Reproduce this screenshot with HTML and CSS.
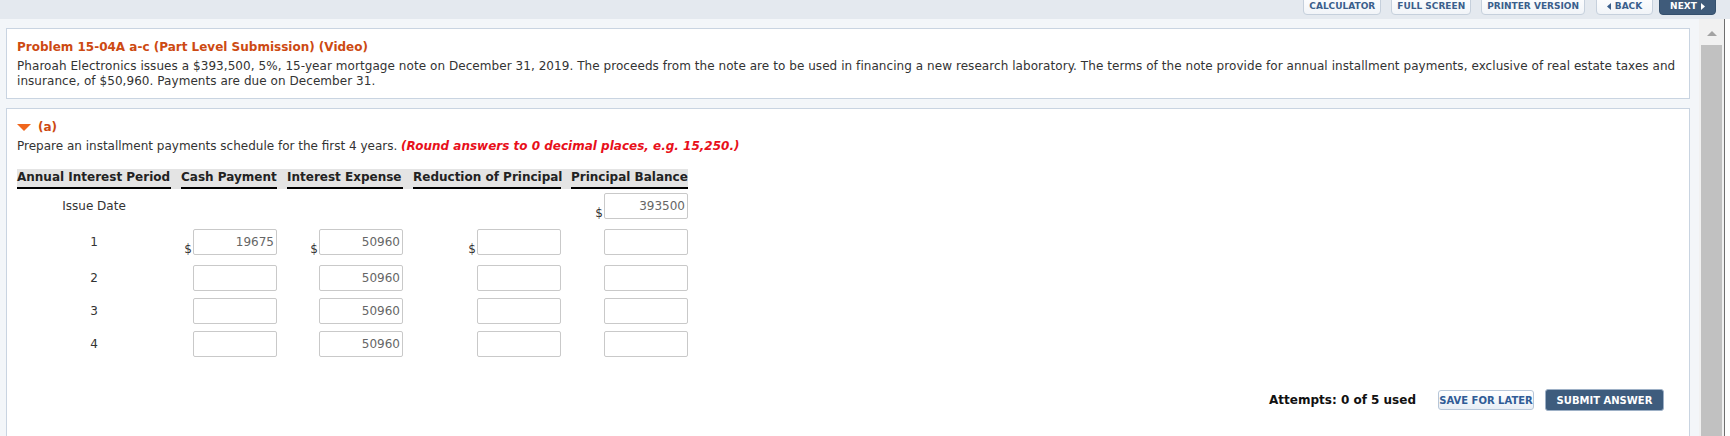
FILE: index.html
```html
<!DOCTYPE html>
<html lang="en">
<head>
  <meta charset="UTF-8" />
  <title>Problem 15-04A</title>
  <link rel="stylesheet" href="styles.css">
</head>
<body>
  <div class="toolbar">
    <button class="tool-btn">Calculator</button>
    <button class="tool-btn">Full Screen</button>
    <button class="tool-btn">Printer Version</button>
    <div class="nav-group">
      <button class="tool-btn nav-btn">
        <svg width="4" height="7" viewBox="0 0 4 7"><path d="M4 0 L0 3.5 L4 7 Z" fill="#3b5f8c"/></svg>Back
      </button>
      <button class="tool-btn nav-btn next-btn">
        Next<svg width="4" height="7" viewBox="0 0 4 7"><path d="M0 0 L4 3.5 L0 7 Z" fill="#fff"/></svg>
      </button>
    </div>
  </div>

  <div class="screen">
    <main class="pane">
      <section class="box problem">
        <h1 class="problem-title">Problem 15-04A a-c (Part Level Submission) (Video)</h1>
        <p class="problem-text">Pharoah Electronics issues a $393,500, 5%, 15-year mortgage note on December 31, 2019. The proceeds from the note are to be used in financing a new research laboratory. The terms of the note provide for annual installment payments, exclusive of real estate taxes and insurance, of $50,960. Payments are due on December 31.</p>
      </section>

      <section class="box part">
        <h2 class="part-title"><span class="caret"></span>(a)</h2>
        <p class="prompt">Prepare an installment payments schedule for the first 4 years. <em class="hint">(Round answers to 0 decimal places, e.g. 15,250.)</em></p>

        <div class="schedule">
          <div class="sched-row sched-head">
            <div class="head-cell">Annual Interest Period</div>
            <div class="head-cell">Cash Payment</div>
            <div class="head-cell">Interest Expense</div>
            <div class="head-cell">Reduction of Principal</div>
            <div class="head-cell">Principal Balance</div>
          </div>

          <div class="sched-row money first">
            <div class="period">Issue Date</div>
            <div class="cell"></div>
            <div class="cell"></div>
            <div class="cell"></div>
            <div class="cell"><span class="dollar">$</span><input class="amount" value="393500"></div>
          </div>

          <div class="sched-row money">
            <div class="period">1</div>
            <div class="cell"><span class="dollar">$</span><input class="amount" value="19675"></div>
            <div class="cell"><span class="dollar">$</span><input class="amount" value="50960"></div>
            <div class="cell"><span class="dollar">$</span><input class="amount" value=""></div>
            <div class="cell"><input class="amount" value=""></div>
          </div>

          <div class="sched-row">
            <div class="period">2</div>
            <div class="cell"><input class="amount" value=""></div>
            <div class="cell"><input class="amount" value="50960"></div>
            <div class="cell"><input class="amount" value=""></div>
            <div class="cell"><input class="amount" value=""></div>
          </div>

          <div class="sched-row">
            <div class="period">3</div>
            <div class="cell"><input class="amount" value=""></div>
            <div class="cell"><input class="amount" value="50960"></div>
            <div class="cell"><input class="amount" value=""></div>
            <div class="cell"><input class="amount" value=""></div>
          </div>

          <div class="sched-row">
            <div class="period">4</div>
            <div class="cell"><input class="amount" value=""></div>
            <div class="cell"><input class="amount" value="50960"></div>
            <div class="cell"><input class="amount" value=""></div>
            <div class="cell"><input class="amount" value=""></div>
          </div>
        </div>

        <div class="submit-bar">
          <span class="attempts">Attempts: 0 of 5 used</span>
          <button class="btn save-btn">Save for Later</button>
          <button class="btn submit-btn">Submit Answer</button>
        </div>
      </section>
    </main>

    <div class="scrollbar">
      <div class="scroll-arrow"><span></span></div>
      <div class="scroll-thumb"></div>
    </div>
  </div>
</body>
</html>
```

FILE: styles.css
```css
html, body {
  margin: 0;
  height: 436px;
  overflow: hidden;
}
body {
  font-family: "DejaVu Sans", Verdana, sans-serif;
  font-size: 12px;
  color: #333;
  background-color: #ffffff;
}

/* Top toolbar */
.toolbar {
  height: 19px;
  box-sizing: border-box;
  display: flex;
  justify-content: flex-end;
  align-items: flex-end;
  gap: 10px;
  padding: 0 14px 4px 0;
  background-color: #e4e9ef;
  overflow: hidden;
}
.tool-btn {
  height: 21px;
  flex-shrink: 0;
  padding: 3px 5px 0;
  font-family: inherit;
  font-size: 9px;
  font-weight: bold;
  text-transform: uppercase;
  white-space: nowrap;
  color: #3b5f8c;
  background: linear-gradient(#ffffff, #f1f4f8);
  border: 1px solid #c6d0dc;
  border-radius: 0 0 4px 4px;
  display: flex;
  align-items: center;
  justify-content: center;
  gap: 4px;
}
.nav-group {
  display: flex;
  gap: 6px;
  margin-left: 1px;
}
.nav-btn {
  width: 57px;
}
.next-btn {
  color: #fff;
  background: #3f5b7a;
  border-color: #35506d;
}

/* Main area */
.screen {
  display: flex;
  height: 417px;
  padding-right: 5px;
}
.pane {
  flex: 1;
  background-color: #f3f6f9;
  padding: 9px 9px 0 6px;
  overflow: hidden;
}
.box {
  background-color: #fff;
  border: 1px solid #c9d4e1;
}
.problem {
  padding: 10px 10px 9px;
}
.problem-title {
  margin: 0 0 4px;
  font-size: 12px;
  line-height: 16px;
  color: #cd4a12;
}
.problem-text {
  margin: 0;
  line-height: 15px;
  letter-spacing: 0.06px;
}

.part {
  margin-top: 9px;
  padding: 10px 25px 80px 10px;
}
.part-title {
  margin: 0 0 4px;
  font-size: 12px;
  line-height: 16px;
  color: #cd4a12;
  display: flex;
  align-items: center;
}
.caret {
  width: 0;
  height: 0;
  border-left: 7px solid transparent;
  border-right: 7px solid transparent;
  border-top: 7px solid #f0661c;
  margin: 1px 7px 0 0;
}
.prompt {
  margin: 0;
  line-height: 15px;
}
.hint {
  color: #e8101a;
  font-weight: bold;
}

/* Schedule */
.schedule {
  margin-top: 15px;
}
.sched-row {
  display: grid;
  grid-template-columns: 154px 96px 116px 148px 117px;
  column-gap: 10px;
  width: 671px;
  align-items: center;
  margin-bottom: 7px;
}
.sched-row.money {
  margin-bottom: 10px;
}
.sched-row.first {
  margin-top: 4px;
}
.sched-head {
  background-color: #e4e4e4;
  margin-bottom: 0;
}
.head-cell {
  font-weight: bold;
  color: #222;
  line-height: 16px;
  padding-bottom: 2px;
  border-bottom: 2px solid #000;
  white-space: nowrap;
}
.period {
  text-align: center;
}
.cell {
  display: flex;
  justify-content: flex-end;
  align-items: flex-end;
  height: 26px;
}
.dollar {
  line-height: 12px;
  margin-right: 1px;
}
.amount {
  width: 84px;
  height: 26px;
  box-sizing: border-box;
  border: 1px solid #c9c9c9;
  border-radius: 2px;
  padding: 0 2px 1px;
  font-family: inherit;
  font-size: 12px;
  color: #666;
  text-align: right;
  background: #fff;
}

/* Submit bar */
.submit-bar {
  display: flex;
  justify-content: flex-end;
  align-items: center;
  margin-top: 32px;
}
.attempts {
  font-weight: bold;
  color: #111;
  margin-right: 22px;
}
.btn {
  font-family: inherit;
  font-size: 10px;
  font-weight: bold;
  text-transform: uppercase;
  white-space: nowrap;
  border-radius: 3px;
  padding: 0;
}
.save-btn {
  width: 96px;
  height: 20px;
  color: #2f5b96;
  background: linear-gradient(#ffffff, #e8eef5);
  border: 1px solid #b7c6d8;
  margin-right: 11px;
}
.submit-btn {
  width: 119px;
  height: 22px;
  color: #fff;
  background: #3e5c7d;
  border: 1px solid #9db0c6;
}

/* Fake scrollbar */
.scrollbar {
  width: 25px;
  background-color: #f1f1f1;
  border-right: 1px solid #6f6f6f;
  display: flex;
  flex-direction: column;
}
.scroll-arrow {
  height: 26px;
  display: flex;
  justify-content: center;
  padding-top: 12px;
  box-sizing: border-box;
}
.scroll-arrow span {
  width: 0;
  height: 0;
  border-left: 5px solid transparent;
  border-right: 5px solid transparent;
  border-bottom: 5px solid #a3a3a3;
}
.scroll-thumb {
  flex: 1;
  margin: 0 2px;
  background-color: #c1c1c1;
}
```
